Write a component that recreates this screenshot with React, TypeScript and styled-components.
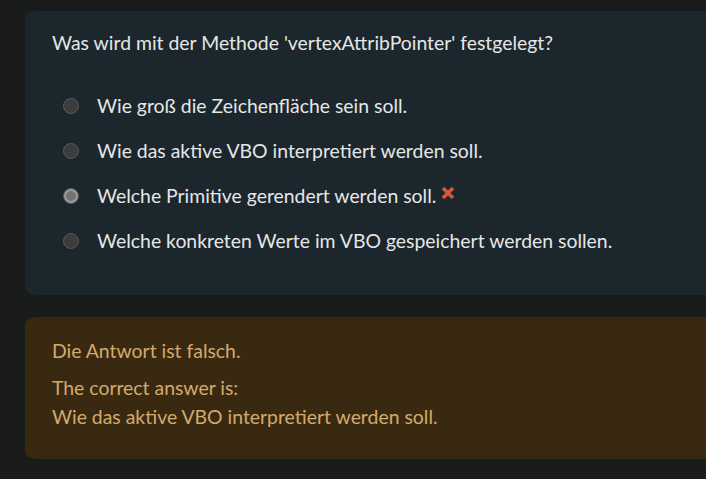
import React from "react"
import styled, { createGlobalStyle } from "styled-components"

const Global = createGlobalStyle`
  html, body {
    margin: 0;
    background: #1a1b1b;
    overflow: hidden;
  }
`

const Page = styled.div`
  display: flex;
  flex-direction: column;
  gap: 22px;
  padding: 11px 0 0 25px;
  font-family: Lato, "Open Sans", sans-serif;
  font-size: 19.4px;
`

const Card = styled.div<{ $tone: "question" | "feedback" }>`
  width: 720px;
  box-sizing: border-box;
  border-radius: 9px;
  background: ${(p) => (p.$tone === "question" ? "#1b272d" : "#3a2911")};
  color: ${(p) => (p.$tone === "question" ? "#e6e6e6" : "#d4a96c")};
`

const QuestionCard = styled(Card)`
  padding: 20px 27px 0;
  height: 284px;
`

const FeedbackCard = styled(Card)`
  padding: 19px 27px 24px;
  height: 142px;
`

const Question = styled.div`
  line-height: 24px;
  margin-bottom: 39px;
`

const Options = styled.div`
  display: flex;
  flex-direction: column;
  gap: 21px;
`

const Option = styled.label`
  display: flex;
  align-items: center;
  height: 24px;
  line-height: 24px;
`

const Radio = styled.span<{ $checked?: boolean }>`
  position: relative;
  width: 16px;
  height: 16px;
  margin: 0 18px 0 11px;
  box-sizing: border-box;
  border-radius: 50%;
  border: 1px solid #5a5a5a;
  background: ${(p) => (p.$checked ? "#9a9a9a" : "#3c3c3c")};
  flex-shrink: 0;
  &::after {
    content: "";
    display: ${(p) => (p.$checked ? "block" : "none")};
    position: absolute;
    inset: 2px;
    border-radius: 50%;
    background: #747474;
  }
`

const WrongMark = styled.svg`
  width: 16px;
  height: 16px;
  margin: -7px 0 0 4px;
`

const FeedbackLine = styled.div<{ $gap?: number }>`
  line-height: 29px;
  margin-top: ${(p) => p.$gap ?? 0}px;
`

const options = [
  "Wie groß die Zeichenfläche sein soll.",
  "Wie das aktive VBO interpretiert werden soll.",
  "Welche Primitive gerendert werden soll.",
  "Welche konkreten Werte im VBO gespeichert werden sollen.",
]

const App: React.FC = () => {
  return (
    <>
      <Global />
      <Page>
        <QuestionCard $tone="question">
          <Question>Was wird mit der Methode 'vertexAttribPointer' festgelegt?</Question>
          <Options>
            {options.map((text, i) => (
              <Option key={i}>
                <Radio $checked={i === 2} />
                {text}
                {i === 2 && (
                  <WrongMark viewBox="0 0 16 16">
                    <path d="M3 3 L13 13 M13 3 L3 13" stroke="#d4573d" strokeWidth="3.6" strokeLinecap="butt" />
                  </WrongMark>
                )}
              </Option>
            ))}
          </Options>
        </QuestionCard>
        <FeedbackCard $tone="feedback">
          <FeedbackLine>Die Antwort ist falsch.</FeedbackLine>
          <FeedbackLine $gap={8}>The correct answer is:</FeedbackLine>
          <FeedbackLine>Wie das aktive VBO interpretiert werden soll.</FeedbackLine>
        </FeedbackCard>
      </Page>
    </>
  )
}

export default App
